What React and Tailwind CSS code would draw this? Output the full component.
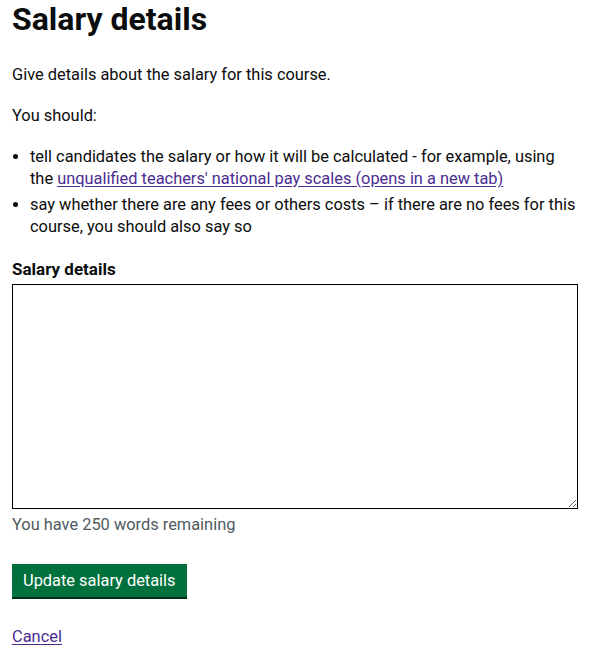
import React from 'react'

const App = () => {
  return (
    <div className="min-h-[657px] bg-white px-3 font-['Roboto','Liberation_Sans',sans-serif] text-[16.4px] leading-[22px] text-[#0b0c0c]">
      <h1 className="mb-[26px] text-[32px] font-bold leading-[38px]">Salary details</h1>

      <p className="mb-[19px]">Give details about the salary for this course.</p>
      <p className="mb-[19px]">You should:</p>

      <ul className="mb-[20px] list-disc pl-[18px]">
        <li className="mb-[4px]">
          tell candidates the salary or how it will be calculated - for example, using the{' '}
          <a href="#" className="text-[#4c2c92] underline underline-offset-2">
            unqualified teachers' national pay scales (opens in a new tab)
          </a>
        </li>
        <li>say whether there are any fees or others costs – if there are no fees for this course, you should also say so</li>
      </ul>

      <label htmlFor="salary" className="mb-[4px] block text-[17px] font-bold">Salary details</label>
      <textarea
        id="salary"
        className="block h-[225px] w-full border border-black p-[5px] text-[16px] outline-none"
      />
      <div className="mt-[5px] text-[#505a5f]">You have 250 words remaining</div>

      {/* Submit */}
      <button className="mt-[28px] block h-[33px] bg-[#00703c] px-[11px] text-white shadow-[0_2px_0_#002d18]">
        Update salary details
      </button>

      <div className="mt-[29px]">
        <a href="#" className="text-[#4c2c92] underline underline-offset-2">Cancel</a>
      </div>
    </div>
  )
}

export default App
